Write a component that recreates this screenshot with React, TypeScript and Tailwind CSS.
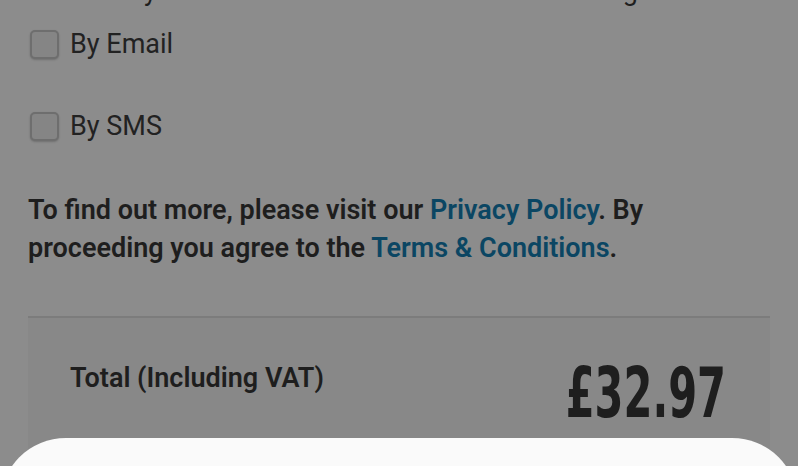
import React from "react";

export default function App() {
  return (
    <div className="relative w-[798px] h-[466px] overflow-hidden bg-[#8c8c8c] font-['Roboto',sans-serif] text-[#1f1f1f]">
      <div className="px-[28px]">
        <p className="-mt-[24px] h-[30px] overflow-hidden text-[27px] leading-[30px] whitespace-nowrap">
          Contact by email or SMS about offers and amazing
        </p>

        <label className="mt-[24px] flex items-center gap-[11px] h-[28px] pl-[2px]">
          <span className="w-[29px] h-[29px] rounded-[5px] border-2 border-[#6e6e6e] bg-[#858585] shadow-[0_1px_2px_rgba(0,0,0,0.2)]" />
          <span className="text-[27px] leading-[28px] text-[#222]">By Email</span>
        </label>

        <label className="mt-[54px] flex items-center gap-[11px] h-[28px] pl-[2px]">
          <span className="w-[29px] h-[29px] rounded-[5px] border-2 border-[#6e6e6e] bg-[#858585] shadow-[0_1px_2px_rgba(0,0,0,0.2)]" />
          <span className="text-[27px] leading-[28px] text-[#222]">By SMS</span>
        </label>

        <p className="mt-[51px] text-[27px] leading-[38px] font-semibold text-[#1e1e1e] w-[700px]">
          To find out more, please visit our{" "}
          <span className="text-[#0b4663]">Privacy Policy</span>. By proceeding you agree to the{" "}
          <span className="text-[#0b4663]">Terms &amp; Conditions</span>.
        </p>

        <div className="mt-[49px] w-[742px] h-[160px] border-t-2 border-[#7c7c7c] bg-[#888888] flex justify-between pl-[42px] pr-[44px]">
          <span className="mt-[45px] text-[27px] leading-[30px] font-semibold text-[#1e1e1e]">
            Total (Including VAT)
          </span>
          <span className="mt-[40px] text-[70px] leading-[70px] font-bold text-[#1e1e1e] font-['DejaVu_Sans_Condensed','DejaVu_Sans',sans-serif] origin-right scale-x-[0.66]">
            £32.97
          </span>
        </div>
      </div>

      <div className="absolute left-0 right-0 top-[438px] h-[120px] bg-[#fafafa] rounded-t-[66px]" />
    </div>
  );
}
